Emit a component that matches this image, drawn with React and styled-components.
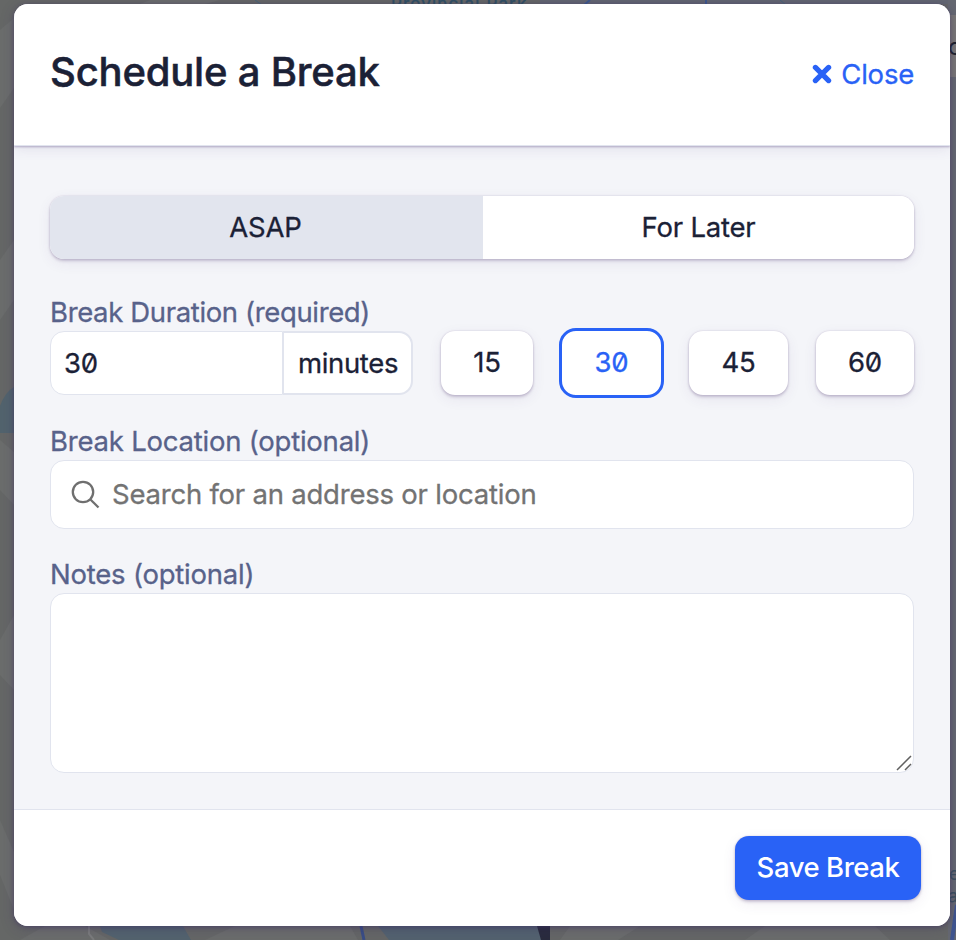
import React from "react";
import styled, { createGlobalStyle, css } from "styled-components";

const GlobalStyle = createGlobalStyle`
  *, *::before, *::after { box-sizing: border-box; }
  body {
    margin: 0;
    overflow: hidden;
    background: #666867;
    color: #1b2136;
    font-family: Inter, "Liberation Sans", sans-serif;
    font-size: 27.5px;
    font-weight: 400;
    letter-spacing: -0.22px;
    font-feature-settings: "zero" 1;
    -webkit-font-smoothing: antialiased;
    -webkit-text-stroke: 0.3px currentColor;
  }
  button, input, textarea { font: inherit; font-feature-settings: inherit; color: inherit; letter-spacing: inherit; }
`;

const cardShadow = css`
  box-shadow: 0 0 2px rgba(75, 50, 110, 0.2), 0 2px 3px rgba(75, 50, 110, 0.24), 0 4px 14px rgba(75, 50, 110, 0.08);
`;

const Screen = styled.div`
  position: relative;
  width: 956px;
  height: 940px;
  padding: 4px 6px 14px 14px;
  overflow: hidden;
`;

const MapLayer = styled.svg`
  position: absolute;
  inset: 0;
`;

const Dialog = styled.section`
  display: flex;
  flex-direction: column;
  width: 936px;
  height: 922px;
  border-radius: 14px;
  overflow: hidden;
  background: #f4f5f9;
`;

const DialogShadow = styled.div`
  position: relative;
  width: 936px;
  border-radius: 14px;
  box-shadow: 0 1px 4px rgba(60, 45, 100, 0.5), 0 3px 14px rgba(60, 45, 100, 0.25);
`;

const Header = styled.header`
  display: flex;
  justify-content: space-between;
  height: 142px;
  flex: none;
  padding: 44px 36px 0;
  background: #fff;
  border-bottom: 1px solid #e1e4ee;
  box-shadow: 0 1px 2px rgba(70, 50, 115, 0.35), 0 3px 12px rgba(70, 50, 115, 0.1);
`;

const Title = styled.h1`
  margin: 0;
  font-size: 40px;
  line-height: 48px;
  font-weight: 500;
  letter-spacing: -0.2px;
  -webkit-text-stroke-width: 0.5px;
`;

const CloseButton = styled.button`
  display: flex;
  align-items: center;
  gap: 9px;
  height: 52px;
  padding: 0;
  border: 0;
  background: none;
  color: #2962f6;
`;

const Body = styled.main`
  display: flex;
  flex-direction: column;
  flex: 1;
  padding: 50px 36px 0;
`;

const Segments = styled.div`
  display: flex;
  height: 63px;
  flex: none;
  margin-bottom: 34px;
  border-radius: 14px;
  overflow: hidden;
  background: #fff;
  ${cardShadow}
`;

const Segment = styled.button`
  flex: ${(p) => (p.$active ? "0 0 433px" : "1")};
  border: 0;
  padding: ${(p) => (p.$active ? "0 2px 1px 0" : "0 0 1px")};
  background: ${(p) => (p.$active ? "#e2e5ee" : "#fff")};
`;

const Label = styled.label`
  display: block;
  height: 38px;
  line-height: 39px;
  color: #58628a;
  letter-spacing: ${(p) => (p.$tight ? "-0.36px" : "-0.22px")};
  white-space: nowrap;
`;

const DurationRow = styled.div`
  display: flex;
  align-items: center;
  height: 64px;
  margin-bottom: 27px;
`;

const DurationInput = styled.input`
  width: 233px;
  height: 64px;
  padding: 0 13px 1px;
  border: 1px solid #e1e4ee;
  border-radius: 14px 0 0 14px;
  background: #fff;
  outline: none;
`;

const Unit = styled.span`
  display: flex;
  align-items: center;
  justify-content: center;
  width: 130px;
  height: 64px;
  padding: 0 0 1px 1px;
  border: 2px solid #e1e4ee;
  border-left-width: 1px;
  border-radius: 0 14px 14px 0;
  background: #fff;
  letter-spacing: -0.33px;
`;

const Presets = styled.div`
  display: grid;
  grid-template-columns: 92px 105px 99px 98px;
  column-gap: 26px;
  align-items: center;
  margin-left: 28px;
`;

const Preset = styled.button`
  height: 64px;
  padding: 0 0 2px;
  border: 0;
  border-radius: 14px;
  background: #fff;
  ${cardShadow}

  ${(p) => p.$active && css`
    height: 70px;
    border: 3px solid #2962f6;
    border-radius: 17px;
    color: #2962f6;
    box-shadow: none;
  `}

  &:nth-child(3) { margin: 0 1px 0 -1px; }
  &:nth-child(4) { margin: 0 -1px 0 1px; }
`;

const SearchBox = styled.div`
  display: flex;
  align-items: center;
  gap: 12px;
  height: 69px;
  padding: 0 20px;
  margin-bottom: 26px;
  border: 1px solid #e1e4ee;
  border-radius: 14px;
  background: #fff;
`;

const SearchInput = styled.input`
  flex: 1;
  padding: 0 0 2px;
  border: 0;
  outline: none;
  background: none;
  &::placeholder { color: #737373; opacity: 1; }
`;

const NotesFrame = styled.div`
  position: relative;
  height: 180px;
`;

const Notes = styled.textarea`
  display: block;
  width: 100%;
  height: 100%;
  padding: 14px;
  border: 1px solid #e1e4ee;
  border-radius: 14px;
  background: #fff;
  resize: none;
  outline: none;
`;

const ResizeGrip = styled.svg`
  position: absolute;
  right: 1px;
  bottom: 1px;
`;

const Footer = styled.footer`
  display: flex;
  justify-content: flex-end;
  flex: none;
  height: 117px;
  padding: 26px 29px 0;
  border-top: 1px solid #e1e4ee;
  background: #fff;
`;

const SaveButton = styled.button`
  width: 186px;
  height: 64px;
  padding: 0 0 2px;
  border: 0;
  border-radius: 14px;
  background: #2962f6;
  color: #fff;
  font-weight: 500;
  letter-spacing: -0.45px;
  -webkit-text-stroke-width: 0;
  ${cardShadow}
`;

const presets = [15, 30, 45, 60];

function DimmedMap() {
  return (
    <MapLayer width="956" height="940" viewBox="0 0 956 940" aria-hidden="true">
      <rect width="956" height="940" fill="#656766" />
      <g fill="#6b6d6c">
        <path d="M0 30 14 18V88L0 108ZM0 260 14 240V300L0 320ZM0 440 14 452V505L0 490ZM0 640 14 615V690L0 675ZM0 820 14 852V910L0 875Z" />
        <path d="M20 940 45 926H85L110 940ZM205 940 235 926H350L358 940ZM570 926H640L618 940H560ZM745 940 765 926H875L890 940ZM150 0H220L205 4H140Z" />
      </g>
      <rect x="540" width="416" height="4" fill="#626671" />
      <rect x="948" width="8" height="940" fill="#656871" />
      <path d="M255 0 262 5M780 0 786 5" stroke="#466579" />
      <path d="M590 0 584 5M706 0V5" stroke="#3d588d" strokeWidth="2" />
      <path d="M0 406Q5 392 14 387V433H0Z" fill="#52636d" />
      <path d="M100 926H183L191 940H119L102 932Z" fill="#53636e" />
      <path d="M89 926V934L94 940" fill="none" stroke="#7b7c7c" strokeWidth="2" />
      <path d="M378 926H541V940H389Z" fill="#53626f" />
      <path d="M361 926 364 940" stroke="#394d86" strokeWidth="3" />
      <path d="M537 926H550V940H541Z" fill="#292b3d" />
      <path d="M957 905 952 940" stroke="#3f5590" strokeWidth="4" />
      <rect x="948" y="15" width="8" height="62" fill="#797776" />
      <text x="391" y="10" textLength="135" fontSize="17" fontFamily="Inter, sans-serif" fill="#2f5063" stroke="#2f5063" strokeWidth="0.4">Provincial Park</text>
      <text x="948" y="55" fontSize="24" fontFamily="Inter, sans-serif" fill="#1b1f2b">o</text>
      <text x="949" y="880" fontSize="18" fontFamily="Inter, sans-serif" fill="#3c505e">e</text>
      <text x="948" y="902" fontSize="18" fontFamily="Inter, sans-serif" fill="#3c505e">a</text>
    </MapLayer>
  );
}

export default function App() {
  return (
    <Screen>
      <GlobalStyle />
      <DimmedMap />
      <DialogShadow>
        <Dialog role="dialog" aria-label="Schedule a Break">
          <Header>
            <Title>Schedule a Break</Title>
            <CloseButton type="button">
              <svg width="20" height="20" viewBox="0 0 20 20" aria-hidden="true">
                <path d="M3.4 3.4 16.6 16.6M16.6 3.4 3.4 16.6" stroke="currentColor" strokeWidth="5.2" strokeLinecap="round" />
              </svg>
              Close
            </CloseButton>
          </Header>
          <Body>
            <Segments>
              <Segment type="button" $active>ASAP</Segment>
              <Segment type="button">For Later</Segment>
            </Segments>
            <Label htmlFor="duration" $tight>Break Duration (required)</Label>
            <DurationRow>
              <DurationInput id="duration" defaultValue="30" />
              <Unit>minutes</Unit>
              <Presets>
                {presets.map((value) => (
                  <Preset key={value} type="button" $active={value === 30}>{value}</Preset>
                ))}
              </Presets>
            </DurationRow>
            <Label htmlFor="location">Break Location (optional)</Label>
            <SearchBox>
              <svg width="29" height="29" viewBox="0 0 29 29" fill="none" stroke="#6f6f6f" strokeWidth="2.3" aria-hidden="true">
                <circle cx="12" cy="12" r="10.2" />
                <path d="M19.2 19.2 27.5 27.5" />
              </svg>
              <SearchInput id="location" placeholder="Search for an address or location" />
            </SearchBox>
            <Label htmlFor="notes">Notes (optional)</Label>
            <NotesFrame>
              <Notes id="notes" />
              <ResizeGrip width="18" height="18" viewBox="0 0 18 18" stroke="#606060" strokeWidth="1.5" aria-hidden="true">
                <path d="M2 16 16 2M10 16 16 10" />
              </ResizeGrip>
            </NotesFrame>
          </Body>
          <Footer>
            <SaveButton type="button">Save Break</SaveButton>
          </Footer>
        </Dialog>
      </DialogShadow>
    </Screen>
  );
}
